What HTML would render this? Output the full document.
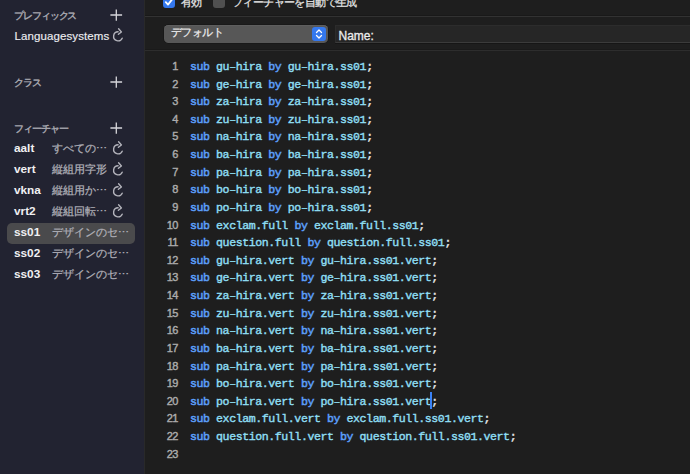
<!DOCTYPE html>
<html><head><meta charset="utf-8">
<style>
*{margin:0;padding:0;box-sizing:border-box}
html,body{width:690px;height:474px;overflow:hidden;background:#1e1e1e;font-family:"Liberation Sans",sans-serif}
#side{position:absolute;left:0;top:0;width:144px;height:474px;background:#222331}
.hdr{position:absolute;left:14px;font-size:10px;letter-spacing:-1.1px;color:#a8a8b0;white-space:nowrap;-webkit-text-stroke:0.4px currentColor}
.ic{position:absolute}
.lang{position:absolute;left:14.5px;top:29.5px;font-size:11.5px;letter-spacing:0.1px;color:#ececf0;white-space:nowrap;-webkit-text-stroke:0.15px currentColor}
.tag{position:absolute;left:14px;font-size:11.8px;font-weight:bold;color:#f0f0f2;margin-top:0.7px}
.desc{position:absolute;left:52px;font-size:11px;color:#b0b0b8;white-space:nowrap;-webkit-text-stroke:0.25px currentColor}
.sel{position:absolute;left:7px;top:223px;width:128px;height:21px;background:#4a4a4c;border-radius:5px}
#main{position:absolute;left:144px;top:0;width:546px;height:474px;background:#1e1e1e}
.sep{position:absolute;left:0;width:546px;height:1px;background:#2c2c2c}
.code{position:absolute;left:0;top:0px;font-family:"Liberation Mono",monospace;font-size:11.6px;letter-spacing:-0.435px;-webkit-text-stroke:0.4px currentColor}
.ln{position:absolute;left:0;width:34px;text-align:right;color:#acacac;font-family:"Liberation Sans",sans-serif;font-size:11px}
.cl{position:absolute;left:46px;white-space:pre;color:#8fdff4}
.k{color:#5c9ffa;-webkit-text-stroke:0.5px currentColor}
.p{color:#e8e8e8}

.cb{position:absolute;top:-4px;width:12px;height:12px;border-radius:3px}
.cb1{left:19px;background:#3478ee}
.cb2{left:69px;background:#505050}
.tlab{position:absolute;top:-5.2px;font-size:11px;letter-spacing:-0.6px;color:#e6e6e6;white-space:nowrap;-webkit-text-stroke:0.25px currentColor}
.popup{position:absolute;left:20px;top:25px;width:164px;height:18px;background:#575757;border-radius:4.5px;box-shadow:0 0 0 0.6px #141414, inset 0 0.6px 0 #666}
.popup .t{position:absolute;left:7px;top:0px;font-size:11px;letter-spacing:-0.6px;color:#ececec;white-space:nowrap;-webkit-text-stroke:0.25px currentColor}
.stp{position:absolute;left:148px;top:2px;width:14px;height:14px;background:#3478ee;border-radius:3px}
.namef{position:absolute;left:191px;top:25px;width:360px;height:18px;background:#262626;border-top:1px solid #2c2c2c;border-left:1px solid #2c2c2c;border-bottom:1px solid #3b3b3b}
.namef .t{position:absolute;left:2.5px;top:3px;font-size:12px;color:#ececec;-webkit-text-stroke:0.3px currentColor}
</style></head><body>
<div id="side">
<div class="hdr" style="top:9.3px">プレフィックス</div><svg class="ic" style="left:110px;top:9px" width="13" height="13" viewBox="0 0 13 13"><path d="M6.3 0.4V11.8M0.4 6H12.1" stroke="#d6d6da" stroke-width="1.3"/></svg>
<div class="lang">Languagesystems</div><svg class="ic" style="left:110px;top:27.4px" width="16" height="16" viewBox="0 0 16 16"><path d="M8.1 4.8A4.5 4.5 0 1 0 12.2 11.2" fill="none" stroke="#b4b4bc" stroke-width="1.4" stroke-linecap="round"/><path d="M8.6 1.8L11.4 5.0L8.4 7.3" fill="none" stroke="#b4b4bc" stroke-width="1.4" stroke-linecap="round" stroke-linejoin="round"/></svg>
<div class="hdr" style="top:76px">クラス</div><svg class="ic" style="left:110px;top:76px" width="13" height="13" viewBox="0 0 13 13"><path d="M6.3 0.4V11.8M0.4 6H12.1" stroke="#d6d6da" stroke-width="1.3"/></svg>
<div class="hdr" style="top:122px">フィーチャー</div><svg class="ic" style="left:110px;top:122px" width="13" height="13" viewBox="0 0 13 13"><path d="M6.3 0.4V11.8M0.4 6H12.1" stroke="#d6d6da" stroke-width="1.3"/></svg>
<div class="sel"></div>
<div class="tag" style="top:140px">aalt</div><div class="desc" style="top:140.5px">すべての⋯</div><svg class="ic" style="left:110px;top:139.5px" width="16" height="16" viewBox="0 0 16 16"><path d="M8.1 4.8A4.5 4.5 0 1 0 12.2 11.2" fill="none" stroke="#b4b4bc" stroke-width="1.4" stroke-linecap="round"/><path d="M8.6 1.8L11.4 5.0L8.4 7.3" fill="none" stroke="#b4b4bc" stroke-width="1.4" stroke-linecap="round" stroke-linejoin="round"/></svg>
<div class="tag" style="top:161.5px">vert</div><div class="desc" style="top:162.0px">縦組用字形</div><svg class="ic" style="left:110px;top:161.0px" width="16" height="16" viewBox="0 0 16 16"><path d="M8.1 4.8A4.5 4.5 0 1 0 12.2 11.2" fill="none" stroke="#b4b4bc" stroke-width="1.4" stroke-linecap="round"/><path d="M8.6 1.8L11.4 5.0L8.4 7.3" fill="none" stroke="#b4b4bc" stroke-width="1.4" stroke-linecap="round" stroke-linejoin="round"/></svg>
<div class="tag" style="top:182.5px">vkna</div><div class="desc" style="top:183.0px">縦組用か⋯</div><svg class="ic" style="left:110px;top:182.0px" width="16" height="16" viewBox="0 0 16 16"><path d="M8.1 4.8A4.5 4.5 0 1 0 12.2 11.2" fill="none" stroke="#b4b4bc" stroke-width="1.4" stroke-linecap="round"/><path d="M8.6 1.8L11.4 5.0L8.4 7.3" fill="none" stroke="#b4b4bc" stroke-width="1.4" stroke-linecap="round" stroke-linejoin="round"/></svg>
<div class="tag" style="top:203.8px">vrt2</div><div class="desc" style="top:204.3px">縦組回転⋯</div><svg class="ic" style="left:110px;top:203.3px" width="16" height="16" viewBox="0 0 16 16"><path d="M8.1 4.8A4.5 4.5 0 1 0 12.2 11.2" fill="none" stroke="#b4b4bc" stroke-width="1.4" stroke-linecap="round"/><path d="M8.6 1.8L11.4 5.0L8.4 7.3" fill="none" stroke="#b4b4bc" stroke-width="1.4" stroke-linecap="round" stroke-linejoin="round"/></svg>
<div class="tag" style="top:224.8px">ss01</div><div class="desc" style="top:225.3px">デザインのセ⋯</div>
<div class="tag" style="top:245.8px">ss02</div><div class="desc" style="top:246.3px">デザインのセ⋯</div>
<div class="tag" style="top:266.4px">ss03</div><div class="desc" style="top:266.9px">デザインのセ⋯</div>
</div>
<div style="position:absolute;left:144px;top:0;width:1px;height:474px;background:#292929;z-index:3"></div>
<div id="main">
  
  <div class="cb cb1"><svg width="12" height="12" viewBox="0 0 12 12" style="position:absolute;left:0;top:0"><path d="M2.8 6.2 L5 8.6 L9.4 3" fill="none" stroke="#fff" stroke-width="1.8" stroke-linecap="round" stroke-linejoin="round"/></svg></div>
  <div class="tlab" style="left:37px">有効</div>
  <div class="cb cb2"></div>
  <div class="tlab" style="left:88px">フィーチャーを自動で生成</div>
  <div class="popup"><span class="t">デフォルト</span><div class="stp"><svg width="14" height="14" viewBox="0 0 14 14" style="position:absolute;left:0;top:0"><path d="M4.5 5.5 L7 3 L9.5 5.5 M4.5 8.5 L7 11 L9.5 8.5" fill="none" stroke="#fff" stroke-width="1.3" stroke-linecap="round" stroke-linejoin="round"/></svg></div></div>
  <div class="namef"><span class="t">Name:</span></div>
<div class="sep" style="top:15px;background:#191919"></div><div class="sep" style="top:16px;background:#323232"></div>
  <div class="sep" style="top:49px;background:#1a1a1a"></div><div class="sep" style="top:50px;background:#2d2d2d"></div><div class="sep" style="top:43px;left:191px;background:#161616"></div>
<div style="position:absolute;left:286px;top:392px;width:2px;height:17px;background:#3a82f6;z-index:2"></div>
<div class="code">
<div class="ln" style="top:60.00px">1</div>
<div class="cl" style="top:60.00px"><span class="k">sub</span> gu–hira <span class="k">by</span> gu–hira.ss01<span class="p">;</span></div>
<div class="ln" style="top:77.62px">2</div>
<div class="cl" style="top:77.62px"><span class="k">sub</span> ge–hira <span class="k">by</span> ge–hira.ss01<span class="p">;</span></div>
<div class="ln" style="top:95.24px">3</div>
<div class="cl" style="top:95.24px"><span class="k">sub</span> za–hira <span class="k">by</span> za–hira.ss01<span class="p">;</span></div>
<div class="ln" style="top:112.86px">4</div>
<div class="cl" style="top:112.86px"><span class="k">sub</span> zu–hira <span class="k">by</span> zu–hira.ss01<span class="p">;</span></div>
<div class="ln" style="top:130.48px">5</div>
<div class="cl" style="top:130.48px"><span class="k">sub</span> na–hira <span class="k">by</span> na–hira.ss01<span class="p">;</span></div>
<div class="ln" style="top:148.10px">6</div>
<div class="cl" style="top:148.10px"><span class="k">sub</span> ba–hira <span class="k">by</span> ba–hira.ss01<span class="p">;</span></div>
<div class="ln" style="top:165.72px">7</div>
<div class="cl" style="top:165.72px"><span class="k">sub</span> pa–hira <span class="k">by</span> pa–hira.ss01<span class="p">;</span></div>
<div class="ln" style="top:183.34px">8</div>
<div class="cl" style="top:183.34px"><span class="k">sub</span> bo–hira <span class="k">by</span> bo–hira.ss01<span class="p">;</span></div>
<div class="ln" style="top:200.96px">9</div>
<div class="cl" style="top:200.96px"><span class="k">sub</span> po–hira <span class="k">by</span> po–hira.ss01<span class="p">;</span></div>
<div class="ln" style="top:218.58px">10</div>
<div class="cl" style="top:218.58px"><span class="k">sub</span> exclam.full <span class="k">by</span> exclam.full.ss01<span class="p">;</span></div>
<div class="ln" style="top:236.20px">11</div>
<div class="cl" style="top:236.20px"><span class="k">sub</span> question.full <span class="k">by</span> question.full.ss01<span class="p">;</span></div>
<div class="ln" style="top:253.82px">12</div>
<div class="cl" style="top:253.82px"><span class="k">sub</span> gu–hira.vert <span class="k">by</span> gu–hira.ss01.vert<span class="p">;</span></div>
<div class="ln" style="top:271.44px">13</div>
<div class="cl" style="top:271.44px"><span class="k">sub</span> ge–hira.vert <span class="k">by</span> ge–hira.ss01.vert<span class="p">;</span></div>
<div class="ln" style="top:289.06px">14</div>
<div class="cl" style="top:289.06px"><span class="k">sub</span> za–hira.vert <span class="k">by</span> za–hira.ss01.vert<span class="p">;</span></div>
<div class="ln" style="top:306.68px">15</div>
<div class="cl" style="top:306.68px"><span class="k">sub</span> zu–hira.vert <span class="k">by</span> zu–hira.ss01.vert<span class="p">;</span></div>
<div class="ln" style="top:324.30px">16</div>
<div class="cl" style="top:324.30px"><span class="k">sub</span> na–hira.vert <span class="k">by</span> na–hira.ss01.vert<span class="p">;</span></div>
<div class="ln" style="top:341.92px">17</div>
<div class="cl" style="top:341.92px"><span class="k">sub</span> ba–hira.vert <span class="k">by</span> ba–hira.ss01.vert<span class="p">;</span></div>
<div class="ln" style="top:359.54px">18</div>
<div class="cl" style="top:359.54px"><span class="k">sub</span> pa–hira.vert <span class="k">by</span> pa–hira.ss01.vert<span class="p">;</span></div>
<div class="ln" style="top:377.16px">19</div>
<div class="cl" style="top:377.16px"><span class="k">sub</span> bo–hira.vert <span class="k">by</span> bo–hira.ss01.vert<span class="p">;</span></div>
<div class="ln" style="top:394.78px">20</div>
<div class="cl" style="top:394.78px"><span class="k">sub</span> po–hira.vert <span class="k">by</span> po–hira.ss01.vert<span class="p">;</span></div>
<div class="ln" style="top:412.40px">21</div>
<div class="cl" style="top:412.40px"><span class="k">sub</span> exclam.full.vert <span class="k">by</span> exclam.full.ss01.vert<span class="p">;</span></div>
<div class="ln" style="top:430.02px">22</div>
<div class="cl" style="top:430.02px"><span class="k">sub</span> question.full.vert <span class="k">by</span> question.full.ss01.vert<span class="p">;</span></div>
<div class="ln" style="top:447.64px">23</div>
</div>
</div>
</body></html>
